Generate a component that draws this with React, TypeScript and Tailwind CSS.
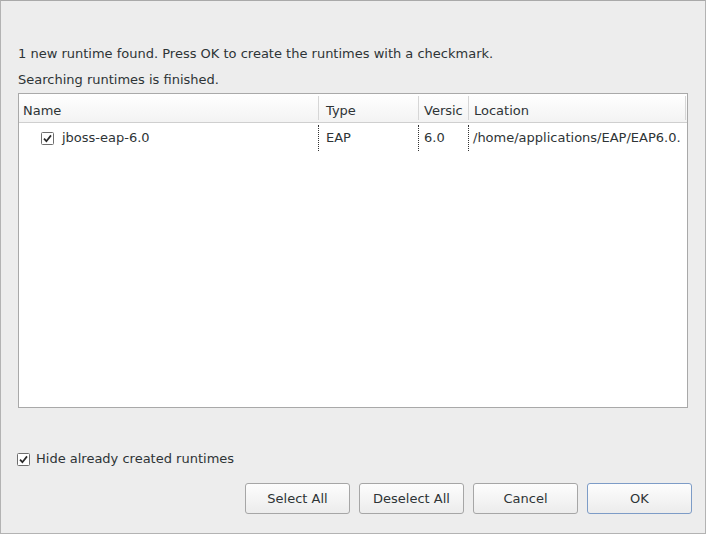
import React from 'react';

const font = { fontFamily: '"DejaVu Sans", "Liberation Sans", sans-serif' };

function Check({ className = '' }: { className?: string }) {
  return (
    <svg width="13" height="13" viewBox="0 0 13 13" className={className}>
      <rect x="0.5" y="0.5" width="12" height="12" rx="1" fill="#fff" stroke="#6e6e6e" />
      <path d="M3 6.6 L5.4 9.2 L10 3.4" fill="none" stroke="#2a2a2a" strokeWidth="1.7" />
    </svg>
  );
}

const cols = [
  { label: 'Name', w: 'w-[299px]' },
  { label: 'Type', w: 'w-[100px]' },
  { label: 'Versic', w: 'w-[50px]' },
  { label: 'Location', w: 'w-[218px]' },
];

function Btn({ label, focus }: { label: string; focus?: boolean }) {
  return (
    <button
      className={
        'w-[105px] h-[31px] pt-[1px] rounded-[3px] border bg-gradient-to-b from-[#fdfdfd] to-[#ececec] text-[13px] text-[#2e3436] ' +
        (focus ? 'border-[#7d9cc7]' : 'border-[#a6a6a6]')
      }
    >
      {label}
    </button>
  );
}

export default function App() {
  return (
    <div
      className="w-[706px] h-[534px] border border-[#b3b3b3] border-t-[#a9a9a9] bg-[#ededed] flex flex-col text-[13px] text-[#2e3436] overflow-hidden"
      style={font}
    >
      <div className="mt-[45px] pl-[17px] leading-[16px]">
        1 new runtime found. Press OK to create the runtimes with a checkmark.
      </div>
      <div className="mt-[10px] pl-[17px] leading-[16px]">Searching runtimes is finished.</div>

      <div className="mt-[5px] ml-[17px] w-[670px] h-[315px] border border-[#a9a9a9] bg-white flex flex-col">
        <div className="flex h-[29px] border-b border-[#cfcfcf] bg-gradient-to-b from-[#ffffff] to-[#f3f3f3]">
          {cols.map((c, i) => (
            <div
              key={c.label}
              className={
                c.w +
                ' flex items-center pt-[6px] pb-[1px] my-[2px] pl-[4px] leading-[16px] whitespace-nowrap overflow-hidden ' +
                (i > 0 ? 'border-l border-[#d6d6d6] pl-[5px] ' : '') +
                (i === 1 ? 'pl-[7px] ' : '') +
                (i === 3 ? 'border-r border-[#d6d6d6]' : '')
              }
            >
              {c.label}
            </div>
          ))}
        </div>
        <div className="flex h-[28px] pt-[2px]">
          <div className="w-[299px] flex items-center pl-[22px] gap-[8px]">
            <Check />
            <span>jboss-eap-6.0</span>
          </div>
          <div className="w-[100px] flex items-center pl-[7px] border-l border-dotted border-[#333]">EAP</div>
          <div className="w-[50px] flex items-center pl-[5px] border-l border-dotted border-[#333]">6.0</div>
          <div className="w-[218px] flex items-center pl-[4px] border-l border-dotted border-[#333] whitespace-nowrap overflow-hidden">
            /home/applications/EAP/EAP6.0.
          </div>
        </div>
      </div>

      <div className="mt-[43px] ml-[16px] flex items-center gap-[6px] leading-[16px]">
        <Check />
        <span>Hide already created runtimes</span>
      </div>

      <div className="mt-[16px] flex justify-end gap-[9px] pr-[13px]">
        <Btn label="Select All" />
        <Btn label="Deselect All" />
        <Btn label="Cancel" />
        <Btn label="OK" focus />
      </div>
    </div>
  );
}
